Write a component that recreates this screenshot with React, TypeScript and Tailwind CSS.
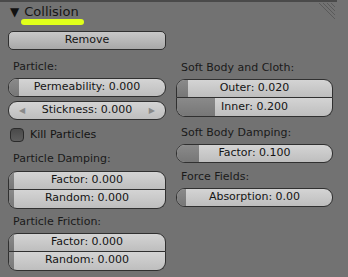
import React from "react";

const font = { fontFamily: '"DejaVu Sans", "Noto Sans", sans-serif' };

function Label({ text }: { text: string }) {
  return <div className="h-[14px] text-[11px] leading-[14px] text-[#1a1a1a] pl-[5px]">{text}</div>;
}

function Slider({
  text,
  fill,
  pos = "single",
  arrows = false,
}: {
  text: string;
  fill: number;
  pos?: "single" | "top" | "bottom";
  arrows?: boolean;
}) {
  const round =
    pos === "single" ? "rounded-[9px]" : pos === "top" ? "rounded-t-[9px]" : "rounded-b-[9px]";
  const border = pos === "bottom" ? "border-t-0" : "";
  return (
    <div
      className={`relative h-[19px] overflow-hidden border border-[#303030] ${border} ${round} bg-gradient-to-b from-[#d4d4d4] to-[#bebebe]`}
    >
      <div
        className="absolute left-0 top-0 bottom-0 bg-gradient-to-b from-[#8a8a8a] to-[#777777]"
        style={{ width: fill }}
      />
      <div className="relative flex h-full items-center justify-between px-[10px] text-[11px] text-[#141414]">
        <span className="w-[8px] text-[8px] text-[#8a8a8a]">{arrows ? "◀" : ""}</span>
        <span>{text}</span>
        <span className="w-[8px] text-[8px] text-[#8a8a8a] text-right">{arrows ? "▶" : ""}</span>
      </div>
    </div>
  );
}

export default function App() {
  return (
    <div className="w-[348px] h-[277px] bg-[#727272] overflow-hidden relative" style={font}>
      {/* top edge of panel */}
      <div className="h-[2px] w-[337px] bg-[#4a4a4a]" />
      <div className="absolute right-[12px] top-[3px]">
        <svg width="18" height="18" viewBox="0 0 18 18">
          <path d="M1 0 L17 16 M5 0 L17 12 M9 0 L17 8 M13 0 L17 4" stroke="#5a5a5a" strokeWidth="1" />
        </svg>
      </div>

      {/* header */}
      <div className="flex items-center h-[20px] pl-[10px] gap-[5px]">
        <span className="text-[12px] text-[#111]">▼</span>
        <span className="relative text-[13px] text-[#161616]">
          Collision
          <span className="absolute -left-[3px] -right-[5px] top-[17px] h-[6px] rounded-full bg-[#e0ff1a]" />
        </span>
      </div>

      <div className="flex gap-[10px] px-[8px] pt-[9px]">
        <div className="flex flex-col w-[158px]">
          <div className="h-[19px] rounded-[5px] border border-[#303030] bg-gradient-to-b from-[#c8c8c8] to-[#a8a8a8] flex items-center justify-center text-[11px] text-[#141414]">
            Remove
          </div>
          <div className="mt-[10px]">
            <Label text="Particle:" />
          </div>
          <div className="mt-[4px]">
            <Slider text="Permeability: 0.000" fill={10} />
          </div>
          <div className="mt-[4px]">
            <Slider text="Stickness: 0.000" fill={0} arrows />
          </div>
          <div className="mt-[7px] flex items-center gap-[6px] pl-[2px]">
            <div className="w-[14px] h-[14px] rounded-[4px] border border-[#2a2a2a] bg-gradient-to-b from-[#4a4a4a] to-[#5e5e5e]" />
            <span className="text-[11px] text-[#141414]">Kill Particles</span>
          </div>
          <div className="mt-[8px]">
            <Label text="Particle Damping:" />
          </div>
          <div className="mt-[5px]">
            <Slider text="Factor: 0.000" fill={5} pos="top" />
            <Slider text="Random: 0.000" fill={5} pos="bottom" />
          </div>
          <div className="mt-[6px]">
            <Label text="Particle Friction:" />
          </div>
          <div className="mt-[4px]">
            <Slider text="Factor: 0.000" fill={5} pos="top" />
            <Slider text="Random: 0.000" fill={5} pos="bottom" />
          </div>
        </div>

        <div className="flex flex-col w-[157px] pt-[30px]">
          <Label text="Soft Body and Cloth:" />
          <div className="mt-[4px]">
            <Slider text="Outer: 0.020" fill={11} pos="top" />
            <Slider text="Inner: 0.200" fill={38} pos="bottom" />
          </div>
          <div className="mt-[9px]">
            <Label text="Soft Body Damping:" />
          </div>
          <div className="mt-[4px]">
            <Slider text="Factor: 0.100" fill={22} />
          </div>
          <div className="mt-[7px]">
            <Label text="Force Fields:" />
          </div>
          <div className="mt-[4px]">
            <Slider text="Absorption: 0.00" fill={9} />
          </div>
        </div>
      </div>
    </div>
  );
}
